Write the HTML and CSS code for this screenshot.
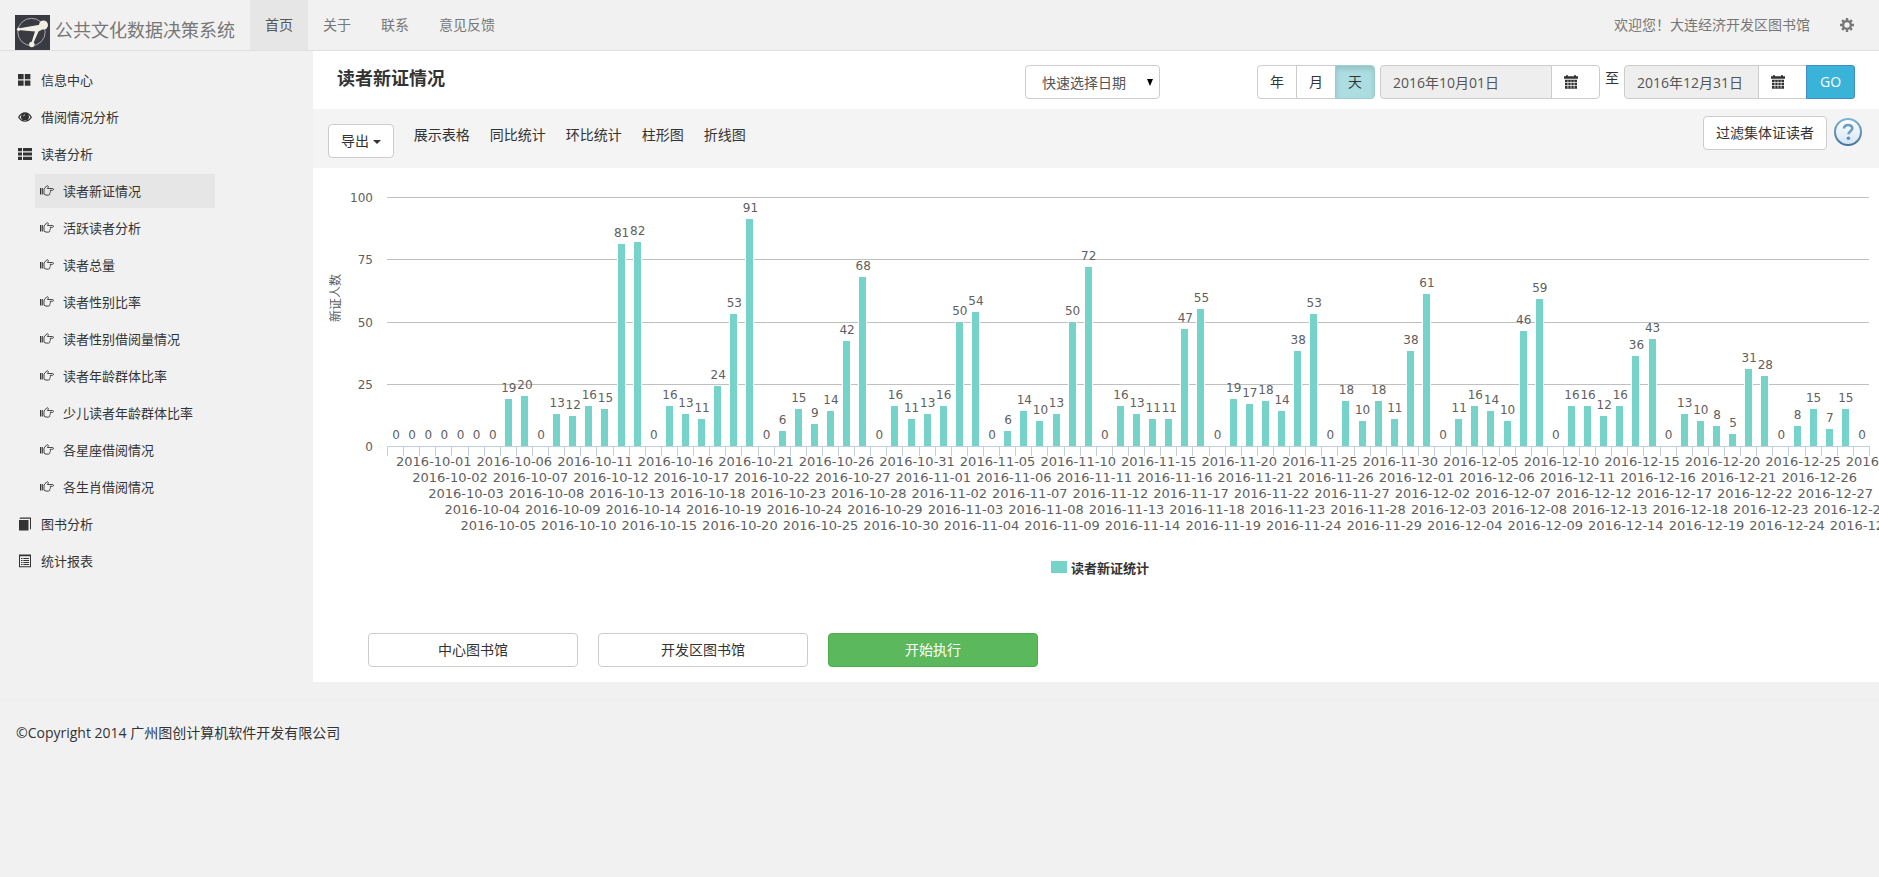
FILE: index.html
```html
<!DOCTYPE html>
<html lang="zh-CN">
<head>
  <meta charset="UTF-8" />
  <title>公共文化数据决策系统</title>
  <link rel="stylesheet" href="styles.css">
</head>
<body>
  <!-- icon set -->
  <svg class="sprite" aria-hidden="true">
    <symbol id="i-large" viewBox="0 0 14 14"><path d="M0 1h5.600v5.200H0zM6.800 1h5.600v5.200H6.800zM0 7.600h5.600v5.200H0zM6.800 7.600h5.600v5.200H6.800z"/></symbol>
    <symbol id="i-eye" viewBox="0 0 14 14"><path fill-rule="evenodd" d="M0 7.200C1.800 4 4.300 2.300 7 2.300S12.200 4 14 7.200C12.200 10.200 9.700 11.700 7 11.700S1.800 10.200 0 7.200zM1.400 7.200C2.900 9.400 4.800 10.600 7 10.600s4.100-1.200 5.600-3.400C11.900 6 11 5 10 4.400a3.900 3.900 0 1 1-6 0C3 5 2.100 6 1.400 7.200z"/><circle cx="7" cy="6.400" r="2.500"/><path d="M5.500 6.200a1.600 1.600 0 0 1 1.500-1.500" fill="none" stroke="#f1f1f1" stroke-width=".7"/></symbol>
    <symbol id="i-list" viewBox="0 0 14 14"><path d="M0 1h4v3.200H0zM5 1h9v3.200H5zM0 5.400h4v3.200H0zM5 5.400h9v3.200H5zM0 9.800h4V13H0zM5 9.800h9V13H5z"/></symbol>
    <symbol id="i-hand" viewBox="0 0 14 14"><path d="M0 4h1.400v6.500H0zM2.200 4h.8v6.500h-.8z"/><path d="M4 10.200V5l2.600-3c.5-.4 1.500-.3 1.700.3.200.6-.3 1.400-.9 2.200h5.200c1.200 0 1.200 1.800 0 1.800h-2.600c.7.500.6 1.400 0 1.700.4.500.2 1.200-.3 1.500.2.700-.1 1.600-1 1.600H6c-.9 0-1.200-.9-2-.9z" fill="none" stroke="currentColor" stroke-width=".9"/></symbol>
    <symbol id="i-book" viewBox="0 0 14 14"><path d="M1 2.900h9.500v10.600H1zM2.200.6H13v11.700h-1V1.700H1.300z"/></symbol>
    <symbol id="i-report" viewBox="0 0 14 14"><path fill-rule="evenodd" d="M1 .5h12v12.800H1zM2 2.300v10h10v-10z"/><path d="M3 4h1.500v1H3zM5.300 4H11v1H5.300zM3 6h1.500v1H3zM5.300 6H11v1H5.300zM3 8h1.500v1H3zM5.300 8H11v1H5.300zM3 10h1.500v1H3zM5.300 10H11v1H5.300z"/></symbol>
    <symbol id="i-cog" viewBox="0 0 14 14"><circle cx="7" cy="7" r="3.900" fill="none" stroke="currentColor" stroke-width="2.400"/><path d="M7 0v2.800M7 11.200V14M0 7h2.800M11.200 7H14M2.100 2.100l2 2M9.900 9.900l2 2M11.900 2.100l-2 2M4.100 9.900l-2 2" fill="none" stroke="currentColor" stroke-width="2.400"/></symbol>
    <symbol id="i-calendar" viewBox="0 0 14 14"><path d="M0 1.300h2V.2h2v1.100h6V.2h2v1.100h2v2.500H0zM1 4.800h12v9H1z"/><path d="M1 7.500h12M1 10.500h12M3.900 5.500v8M7 5.500v8M10.100 5.500v8" fill="none" stroke="#fff" stroke-width=".7"/></symbol>
  </svg>

  <header class="navbar">
    <a class="brand" href="#">
      <svg class="logo" viewBox="0 0 35 35" aria-hidden="true">
        <rect width="35" height="35" fill="#3a3a42"/>
        <circle cx="16.500" cy="17" r="13.700" fill="none" stroke="#a9a9a9"/>
        <path d="M3 13.400L26 9.500l4 3.500-6.500 3.500L18 29h-2l4-12.500L3 15z" fill="#f1efe4"/>
        <circle cx="28.500" cy="10" r="4.500" fill="#f1efe4"/>
        <circle cx="3.600" cy="14.200" r="1.700" fill="#f1efe4"/>
        <circle cx="16.800" cy="29.500" r="2.700" fill="#f1efe4"/>
      </svg>
      公共文化数据决策系统
    </a>
    <nav class="nav">
      <a class="active" href="#">首页</a>
      <a href="#">关于</a>
      <a href="#">联系</a>
      <a href="#">意见反馈</a>
    </nav>
    <div class="user">
      <span>欢迎您！大连经济开发区图书馆</span>
      <a href="#" aria-label="设置"><svg class="icon"><use href="#i-cog"/></svg></a>
    </div>
  </header>

  <div class="layout">
    <aside class="sidebar">
      <a href="#"><svg class="icon"><use href="#i-large"/></svg>信息中心</a>
      <a href="#"><svg class="icon"><use href="#i-eye"/></svg>借阅情况分析</a>
      <a href="#"><svg class="icon"><use href="#i-list"/></svg>读者分析</a>
      <div class="submenu">
        <a class="active" href="#"><svg class="icon"><use href="#i-hand"/></svg>读者新证情况</a>
        <a href="#"><svg class="icon"><use href="#i-hand"/></svg>活跃读者分析</a>
        <a href="#"><svg class="icon"><use href="#i-hand"/></svg>读者总量</a>
        <a href="#"><svg class="icon"><use href="#i-hand"/></svg>读者性别比率</a>
        <a href="#"><svg class="icon"><use href="#i-hand"/></svg>读者性别借阅量情况</a>
        <a href="#"><svg class="icon"><use href="#i-hand"/></svg>读者年龄群体比率</a>
        <a href="#"><svg class="icon"><use href="#i-hand"/></svg>少儿读者年龄群体比率</a>
        <a href="#"><svg class="icon"><use href="#i-hand"/></svg>各星座借阅情况</a>
        <a href="#"><svg class="icon"><use href="#i-hand"/></svg>各生肖借阅情况</a>
      </div>
      <a href="#"><svg class="icon"><use href="#i-book"/></svg>图书分析</a>
      <a href="#"><svg class="icon"><use href="#i-report"/></svg>统计报表</a>
    </aside>

    <main class="content">
      <div class="head">
        <h1>读者新证情况</h1>
        <div class="quick">
          <select aria-label="快速选择日期">
            <option>快速选择日期</option>
          </select>
        </div>
        <div class="period">
          <button class="btn" type="button">年</button>
          <button class="btn" type="button">月</button>
          <button class="btn active" type="button">天</button>
        </div>
        <div class="date date-from">
          <input type="text" value="2016年10月01日" aria-label="开始日期" readonly>
          <button class="btn" type="button" aria-label="选择开始日期"><svg class="icon"><use href="#i-calendar"/></svg></button>
        </div>
        <span class="to">至</span>
        <div class="date date-to">
          <input type="text" value="2016年12月31日" aria-label="结束日期" readonly>
          <button class="btn" type="button" aria-label="选择结束日期"><svg class="icon"><use href="#i-calendar"/></svg></button>
          <button class="btn go" type="button">GO</button>
        </div>
      </div>

      <div class="toolbar">
        <button class="btn export" type="button">导出 <span class="caret"></span></button>
        <a href="#">展示表格</a>
        <a href="#">同比统计</a>
        <a href="#">环比统计</a>
        <a href="#">柱形图</a>
        <a href="#">折线图</a>
        <button class="btn filter" type="button">过滤集体证读者</button>
        <a class="help" href="#" aria-label="帮助">
          <svg viewBox="0 0 30 30" aria-hidden="true">
            <defs>
              <linearGradient id="ring" x2="0" y2="1"><stop offset="0" stop-color="#7fb0d6"/><stop offset="1" stop-color="#44749b"/></linearGradient>
              <linearGradient id="disc" x2="0" y2="1"><stop offset="0" stop-color="#fff"/><stop offset="1" stop-color="#d3e5f4"/></linearGradient>
            </defs>
            <circle cx="15" cy="15" r="13" fill="url(#disc)" stroke="url(#ring)" stroke-width="2"/>
            <path d="M11 11.500c.3-4.600 8.300-4.600 8.300-.2 0 2.900-3.800 3-3.800 6" fill="none" stroke="#6c9cc4" stroke-width="2.600"/>
            <circle cx="15.400" cy="21.200" r="1.800" fill="#5c92bf"/>
          </svg>
        </a>
      </div>

      <svg id="chart" class="chart" role="img" aria-label="读者新证统计"></svg>

      <div class="actions">
        <button class="btn" type="button">中心图书馆</button>
        <button class="btn" type="button">开发区图书馆</button>
        <button class="btn success" type="button">开始执行</button>
      </div>
    </main>
  </div>

  <footer class="footer">©Copyright 2014 广州图创计算机软件开发有限公司</footer>

  <script src="chart.js"></script>
</body>
</html>
```

FILE: styles.css
```css
* { box-sizing: border-box; }
body {
  margin: 0;
  background: #f1f1f1;
  color: #333;
  font: 14px/20px "Open Sans", "Noto Sans CJK SC", sans-serif;
  overflow-x: hidden;
}
a { color: inherit; text-decoration: none; }
button, input, select { font: inherit; color: inherit; }
.sprite { display: none; }
.icon {
  width: 14px;
  height: 14px;
  fill: currentColor;
  flex: none;
}

/* top bar */
.navbar {
  display: flex;
  height: 51px;
  border-bottom: 1px solid #e0e0e0;
  color: #777;
}
.brand {
  display: flex;
  gap: 5px;
  padding: 15px 15px 0;
  font-size: 18px;
  line-height: 30px;
}
.logo { width: 35px; height: 35px; }
.nav { display: flex; }
.nav a { padding: 15px; }
.nav a.active { background: #e6e6e6; color: #555; }
.user {
  display: flex;
  align-items: center;
  gap: 30px;
  margin-left: auto;
  padding-right: 25px;
}
.user .icon { display: block; }

/* side menu */
.layout { display: flex; }
.sidebar {
  flex: none;
  width: 313px;
  padding: 12px 98px 0 0;
  font-size: 13px;
}
.sidebar a {
  display: flex;
  align-items: center;
  gap: 9px;
  height: 34px;
  margin-bottom: 3px;
  padding-left: 18px;
}
.submenu { padding-left: 35px; }
.submenu a { padding-left: 5px; }
.submenu a.active { background: #e6e6e6; }

.content {
  flex: 1;
  min-width: 0;
  background: #fff;
}
.btn {
  height: 34px;
  padding: 0 12px;
  border: 1px solid #ccc;
  border-radius: 4px;
  background: #fff;
}

/* title and date range */
.head {
  display: flex;
  align-items: center;
  height: 58px;
  padding: 3px 24px 0;
}
.head h1 {
  margin: 0 auto 8px 0;
  font-size: 18px;
  line-height: 20px;
}
.quick { position: relative; margin-right: 97px; }
.quick select {
  width: 135px;
  height: 34px;
  padding: 2px 12px 0 16px;
  border: 1px solid #ccc;
  border-radius: 4px;
  background: #fff;
  color: #555;
  appearance: none;
}
.quick::after {
  content: "";
  position: absolute;
  top: 14px;
  right: 7px;
  border: 3px solid transparent;
  border-top: 7px solid #000;
  border-bottom: 0;
}
.period { display: flex; margin-right: 5px; }
.period .btn { width: 40px; border-radius: 0; }
.period .btn + .btn { margin-left: -1px; }
.period .btn:first-child { border-radius: 4px 0 0 4px; }
.period .btn:last-child { border-radius: 0 4px 4px 0; }
.period .btn.active {
  border-color: #9cced2;
  background: #abdde1;
  box-shadow: inset 0 3px 5px rgba(0,0,0,0.125);
}
.date { display: flex; }
.date input {
  height: 34px;
  padding: 0 12px;
  border: 1px solid #ccc;
  border-radius: 4px 0 0 4px;
  background: #eee;
  color: #555;
}
.date-from input { width: 172px; }
.date-to input { width: 135px; }
.date .btn {
  width: 49px;
  margin-left: -1px;
  border-radius: 0 4px 4px 0;
  text-align: left;
}
.date .icon { display: block; }
.date-to .btn { border-radius: 0; }
.date .go {
  border: 1px solid #428bca;
  border-radius: 0 3px 3px 0;
  background: #39b3d7;
  color: #fff;
  text-align: center;
}
.to { padding: 0 5px 8px; }

/* chart tools */
.toolbar {
  display: flex;
  gap: 20px;
  height: 59px;
  padding: 7px 16px 0 15px;
  background: #f4f4f4;
}
.toolbar a { padding-top: 9px; }
.export { margin-top: 8px; }
.caret {
  display: inline-block;
  vertical-align: middle;
  border: 4px solid transparent;
  border-top-color: #333;
  border-bottom: 0;
}
.filter { margin-left: auto; }
.toolbar .help { width: 30px; margin-left: -14px; padding-top: 1px; }
.help svg { display: block; width: 30px; height: 30px; }

.chart {
  display: block;
  width: 100%;
  height: 420px;
  font-family: "DejaVu Sans", "Noto Sans CJK SC", sans-serif;
  font-size: 12px;
  fill: #606060;
}
.chart .grid { stroke: #c0c0c0; }
.chart .axis { stroke: #c0d0e0; }
.chart .bar { fill: #76d3c9; stroke: #fff; stroke-width: 2px; paint-order: stroke; }
.chart .swatch { fill: #76d3c9; }
.chart .middle { text-anchor: middle; }
.chart .end { text-anchor: end; }
.chart .day { font-size: 13px; }
.chart .legend { font-size: 13px; font-weight: bold; fill: #333; }

.actions {
  display: flex;
  gap: 20px;
  padding: 45px 55px 15px;
}
.actions .btn { width: 210px; }
.actions .success { border-color: #4cae4c; background: #5cb85c; color: #fff; }

.footer {
  margin-top: 18px;
  padding: 22px 16px;
  border-top: 1px solid #eee;
}
```

FILE: chart.js
```js
const values = [
  0, 0, 0, 0, 0, 0, 0, 19, 20, 0, 13, 12, 16, 15, 81, 82, 0, 16, 13, 11, 24, 53, 91,
  0, 6, 15, 9, 14, 42, 68, 0, 16, 11, 13, 16, 50, 54, 0, 6, 14, 10, 13, 50, 72,
  0, 16, 13, 11, 11, 47, 55, 0, 19, 17, 18, 14, 38, 53, 0, 18, 10, 18, 11, 38, 61,
  0, 11, 16, 14, 10, 46, 59, 0, 16, 16, 12, 16, 36, 43, 0, 13, 10, 8, 5, 31, 28,
  0, 8, 15, 7, 15, 0
];

const svg = document.getElementById("chart");

function add(tag, attrs, text) {
  const el = document.createElementNS("http://www.w3.org/2000/svg", tag);
  for (const name in attrs) el.setAttribute(name, attrs[name]);
  if (text !== undefined) el.textContent = text;
  svg.appendChild(el);
}

function draw() {
  svg.replaceChildren();
  const width = svg.clientWidth;
  const left = 74, right = width - 10, top = 29, bottom = 278;
  const step = (right - left) / values.length;
  const yOf = v => Math.round(bottom - v * (bottom - top) / 100);

  // horizontal grid with scale
  for (let v = 0; v <= 100; v += 25) {
    const y = yOf(v) + 0.5;
    if (v > 0) add("line", { x1: left, x2: right, y1: y, y2: y, class: "grid" });
    add("text", { x: left - 14, y: y + 4, class: "end" }, v);
  }
  add("text", { x: 0, y: 0, transform: "translate(27 130) rotate(-90)", class: "middle" }, "新证人数");

  values.forEach((v, i) => {
    if (v === 0) return;
    add("rect", { x: Math.round(left + (i + 0.5) * step) - 3, y: yOf(v), width: 7, height: bottom - yOf(v), class: "bar" });
  });

  add("line", { x1: left, x2: right, y1: bottom + 0.5, y2: bottom + 0.5, class: "axis" });
  for (let i = 0; i <= values.length; i++) {
    const x = Math.round(left + i * step) + 0.5;
    add("line", { x1: x, x2: x, y1: bottom, y2: bottom + 10, class: "axis" });
  }

  values.forEach((v, i) => {
    const x = left + (i + 0.5) * step + 1;
    add("text", { x: x, y: yOf(v) - 7, class: "middle" }, v);
    if (i === values.length - 1) return;
    const day = new Date(Date.UTC(2016, 9, 1 + i)).toISOString().slice(0, 10);
    add("text", { x: x, y: bottom + 20 + (i % 5) * 16, class: "day" }, day);
  });

  const mid = width / 2;
  add("rect", { x: mid - 45, y: 393, width: 16, height: 12, class: "swatch" });
  add("text", { x: mid - 25, y: 405, class: "legend" }, "读者新证统计");
}

draw();
window.addEventListener("resize", draw);
```
